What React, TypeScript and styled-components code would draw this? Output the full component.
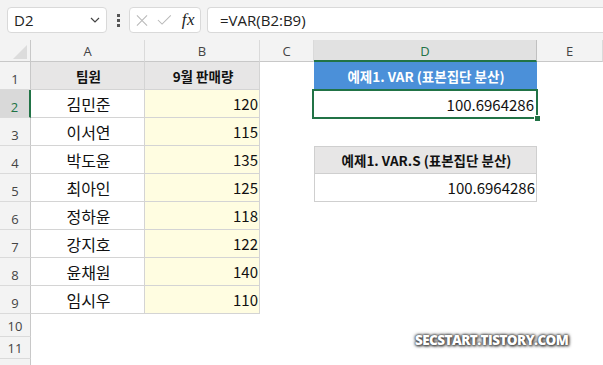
import React from "react";
import styled, { createGlobalStyle, css } from "styled-components";

const GlobalStyle = createGlobalStyle`
  html, body {
    margin: 0;
    padding: 0;
    background: #ffffff;
    overflow: hidden;
  }
  body {
    font-family: "Noto Sans CJK KR", "Noto Sans", sans-serif;
  }
`;

const GREEN = "#217346";
const GRID = "#d4d4d4";

const Page = styled.div`
  width: 603px;
  height: 365px;
  position: relative;
  overflow: hidden;
  background: #ffffff;
`;

const Toolbar = styled.div`
  height: 40px;
  box-sizing: border-box;
  display: flex;
  align-items: flex-start;
  padding: 7px 0 0 7px;
  background: #f3f3f3;
`;

const Box = styled.div<{ $w?: number }>`
  height: 26px;
  box-sizing: border-box;
  background: #ffffff;
  border: 1px solid #d9d9d9;
  border-radius: 4px;
  display: flex;
  align-items: center;
  ${({ $w }) => ($w ? `width: ${$w}px;` : "flex: 1;")}
`;

const NameBox = styled(Box)`
  justify-content: space-between;
  padding: 0 6px 0 6px;
  font-family: "Open Sans", "Noto Sans", sans-serif;
  font-size: 15px;
  color: #222;
`;

const Dots = styled.div`
  width: 22px;
  height: 26px;
  display: flex;
  align-items: center;
  justify-content: center;
`;

const FxBox = styled(Box)`
  padding: 0 5px 0 6px;
  gap: 9px;
  margin-right: 6px;
`;

const Fx = styled.span`
  font-family: "Liberation Serif", serif;
  font-style: italic;
  font-size: 17px;
  color: #222;
  margin-left: 1px;
  letter-spacing: 0.5px;
`;

const Formula = styled(Box)`
  padding-left: 12px;
  border-right: none;
  border-radius: 4px 0 0 4px;
  font-family: "Open Sans", "Noto Sans", sans-serif;
  font-size: 15px;
  color: #222;
`;

const Sheet = styled.div`
  display: grid;
  grid-template-columns: 31px 114px 115px 54px 223px 66px;
  grid-template-rows: 22px repeat(9, 28px) 23px 22px 23px;
`;

const Corner = styled.div`
  background: #f3f3f3;
  border-right: 1px solid #c8c8c8;
  border-bottom: 1px solid #c8c8c8;
  box-sizing: border-box;
  display: flex;
  align-items: flex-end;
  justify-content: flex-end;
  padding: 0 3px 2px 0;
`;

const ColHeader = styled.div<{ $active?: boolean }>`
  box-sizing: border-box;
  background: ${({ $active }) => ($active ? "#e1e1e1" : "#f3f3f3")};
  border-right: 1px solid ${({ $active }) => ($active ? "#c0c0c0" : "#dadada")};
  border-bottom: ${({ $active }) =>
    $active ? `2px solid ${GREEN}` : "1px solid #c8c8c8"};
  display: flex;
  align-items: center;
  justify-content: center;
  font-family: "Open Sans", "Noto Sans", sans-serif;
  font-size: 13px;
  color: ${({ $active }) => ($active ? GREEN : "#444")};
  padding-top: ${({ $active }) => ($active ? "1px" : "0")};
`;

const RowHeader = styled.div<{ $active?: boolean }>`
  box-sizing: border-box;
  background: ${({ $active }) => ($active ? "#d9d9d9" : "#f3f3f3")};
  border-right: ${({ $active }) =>
    $active ? `2px solid ${GREEN}` : "1px solid #c8c8c8"};
  border-bottom: 1px solid #dadada;
  display: flex;
  align-items: flex-end;
  justify-content: center;
  padding-bottom: 1px;
  font-family: "Open Sans", "Noto Sans", sans-serif;
  font-size: 13px;
  color: ${({ $active }) => ($active ? GREEN : "#444")};
`;

type Kind = "head" | "name" | "num" | "blue" | "gray" | "value" | "empty";

const Cell = styled.div<{ $kind: Kind; $top?: boolean }>`
  box-sizing: border-box;
  display: flex;
  align-items: center;
  position: relative;
  font-size: 15px;
  color: #111;
  white-space: nowrap;
  padding: 0 1px 0 3px;
  ${({ $kind }) =>
    $kind !== "empty" &&
    css`
      border-right: 1px solid ${GRID};
      border-bottom: 1px solid ${GRID};
    `}
  ${({ $kind }) =>
    $kind === "head" &&
    css`
      background: #e7e6e6;
      justify-content: center;
      font-weight: 700;
      font-size: 13.5px;
    `}
  ${({ $kind }) =>
    $kind === "name" &&
    css`
      justify-content: center;
      font-size: 16px;
    `}
  ${({ $kind }) =>
    $kind === "num" &&
    css`
      background: #fffde1;
      justify-content: flex-end;
    `}
  ${({ $kind }) =>
    $kind === "blue" &&
    css`
      background: #4b90d9;
      color: #ffffff;
      justify-content: center;
      font-weight: 700;
      font-size: 13.5px;
      border-color: #4b90d9;
    `}
  ${({ $kind }) =>
    $kind === "gray" &&
    css`
      background: #e7e6e6;
      justify-content: center;
      font-weight: 700;
      font-size: 13.5px;
      border: 1px solid #cfcfcf;
    `}
  ${({ $kind, $top }) =>
    $kind === "value" &&
    css`
      justify-content: flex-end;
      border: 1px solid #cfcfcf;
      ${$top ? "" : "border-top: none;"}
    `}
`;

const SelectedCell = styled(Cell)`
  justify-content: flex-end;
  padding-right: 3px;
`;

const Selection = styled.div`
  position: absolute;
  inset: -1px -1px -1px -2px;
  border: 2px solid ${GREEN};
  pointer-events: none;
  &::after {
    content: "";
    position: absolute;
    right: -5px;
    bottom: -5px;
    width: 5px;
    height: 5px;
    background: ${GREEN};
    border: 1px solid #ffffff;
  }
`;

const Watermark = styled.div`
  position: absolute;
  left: 415px;
  top: 331px;
  font-family: "Open Sans", "Noto Sans", sans-serif;
  font-weight: 800;
  font-size: 13.5px;
  letter-spacing: -0.55px;
  color: #ffffff;
  text-shadow: 0 0 2px #444, 0 0 3px #555, 1px 1px 3px #333, 0 0 4px #777;
`;

const names = ["김민준", "이서연", "박도윤", "최아인", "정하윤", "강지호", "윤채원", "임시우"];
const sales = [120, 115, 135, 125, 118, 122, 140, 110];
const cols = ["A", "B", "C", "D", "E"];

const Chevron = () => (
  <svg width="10" height="6" viewBox="0 0 10 6">
    <path d="M1 1 L5 5 L9 1" fill="none" stroke="#444" strokeWidth="1.2" />
  </svg>
);

const VDots = () => (
  <svg width="3" height="13" viewBox="0 0 3 13">
    <rect x="0" y="0" width="3" height="3" fill="#555" />
    <rect x="0" y="5" width="3" height="3" fill="#555" />
    <rect x="0" y="10" width="3" height="3" fill="#555" />
  </svg>
);

const Cross = () => (
  <svg width="13" height="13" viewBox="0 0 13 13">
    <path d="M1 1 L12 12 M12 1 L1 12" stroke="#b8b8b8" strokeWidth="1.1" />
  </svg>
);

const Check = () => (
  <svg width="16" height="12" viewBox="0 0 16 12">
    <path d="M1 6 L5.5 10.5 L15 1" fill="none" stroke="#b8b8b8" strokeWidth="1.1" />
  </svg>
);

const CornerMark = () => (
  <svg width="14" height="14" viewBox="0 0 14 14">
    <path d="M14 0 L14 14 L0 14 Z" fill="#dcdcdc" />
  </svg>
);

export default function App() {
  const rightCells = (row: number) => {
    // columns C, D, E for each data row
    let d: React.ReactNode = <Cell $kind="empty" />;
    if (row === 1) d = <Cell $kind="blue">예제1. VAR (표본집단 분산)</Cell>;
    if (row === 2)
      d = (
        <SelectedCell $kind="empty">
          100.6964286
          <Selection />
        </SelectedCell>
      );
    if (row === 4) d = <Cell $kind="gray">예제1. VAR.S (표본집단 분산)</Cell>;
    if (row === 5) d = <Cell $kind="value">100.6964286</Cell>;
    return (
      <>
        <Cell $kind="empty" />
        {d}
        <Cell $kind="empty" />
      </>
    );
  };

  return (
    <Page>
      <GlobalStyle />
      <Toolbar>
        <NameBox $w={100}>
          <span>D2</span>
          <Chevron />
        </NameBox>
        <Dots>
          <VDots />
        </Dots>
        <FxBox $w={72}>
          <Cross />
          <Check />
          <Fx>fx</Fx>
        </FxBox>
        <Formula>=VAR(B2:B9)</Formula>
      </Toolbar>
      <Sheet>
        <Corner>
          <CornerMark />
        </Corner>
        {cols.map((c) => (
          <ColHeader key={c} $active={c === "D"}>
            {c}
          </ColHeader>
        ))}

        <RowHeader>1</RowHeader>
        <Cell $kind="head">팀원</Cell>
        <Cell $kind="head">9월 판매량</Cell>
        {rightCells(1)}

        {names.map((n, i) => (
          <React.Fragment key={n}>
            <RowHeader $active={i === 0}>{i + 2}</RowHeader>
            <Cell $kind="name">{n}</Cell>
            <Cell $kind="num">{sales[i]}</Cell>
            {rightCells(i + 2)}
          </React.Fragment>
        ))}

        {[10, 11, 12].map((r) => (
          <React.Fragment key={r}>
            {/* row 12 sits below the window edge; only its header strip shows */}
            <RowHeader>{r < 12 ? r : ""}</RowHeader>
            <Cell $kind="empty" />
            <Cell $kind="empty" />
            <Cell $kind="empty" />
            <Cell $kind="empty" />
            <Cell $kind="empty" />
          </React.Fragment>
        ))}
      </Sheet>
      <Watermark>SECSTART.TISTORY.COM</Watermark>
    </Page>
  );
}
